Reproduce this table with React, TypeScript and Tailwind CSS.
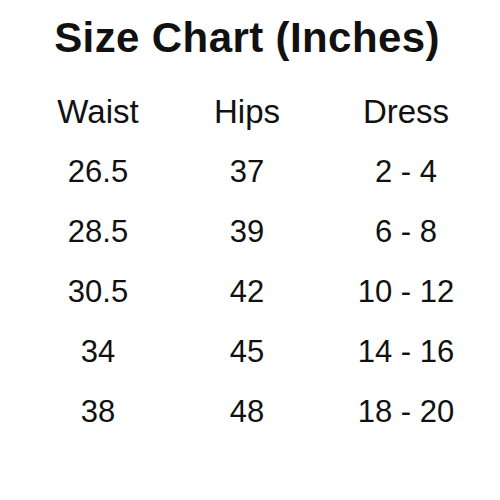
const ROWS = [
  ["26.5", "37", "2 - 4"],
  ["28.5", "39", "6 - 8"],
  ["30.5", "42", "10 - 12"],
  ["34", "45", "14 - 16"],
  ["38", "48", "18 - 20"],
];

export default function App() {
  return (
    <main className="w-[500px] h-[500px] bg-white text-[#111] font-['Liberation_Sans',Arial,sans-serif]">
      <h1 className="pt-[14px] pr-[6px] text-center text-[42px] leading-[48px] font-bold tracking-[0.4px]">
        Size Chart (Inches)
      </h1>

      <div className="mt-[20px] pl-[23px] grid grid-cols-[150px_148px_170px] text-center">
        <div className="text-[33px] leading-[60px]">Waist</div>
        <div className="text-[33px] leading-[60px]">Hips</div>
        <div className="text-[33px] leading-[60px]">Dress</div>
        {ROWS.map((r) =>
          r.map((cell, i) => (
            <div key={r[0] + i} className="text-[31px] leading-[60px]">
              {cell}
            </div>
          ))
        )}
      </div>
    </main>
  );
}
